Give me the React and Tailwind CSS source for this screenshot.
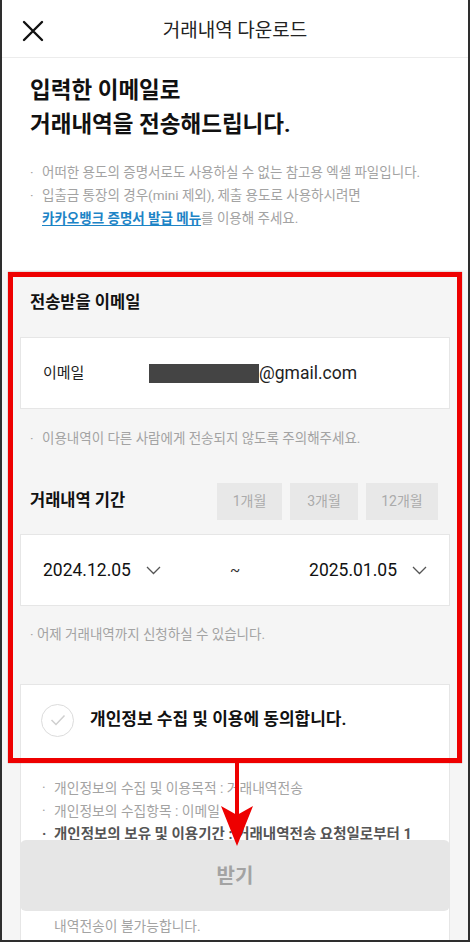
import React from "react";

const FONT = { fontFamily: 'Roboto, "Noto Sans CJK KR", sans-serif' };

function Bullet({ children, className = "" }) {
  return (
    <div className={`flex ${className}`}>
      <span className="w-[12px] shrink-0">·</span>
      <div>{children}</div>
    </div>
  );
}

function Chevron() {
  return (
    <svg width="15" height="9" viewBox="0 0 15 9" className="ml-[15px]">
      <path d="M1 1 L7.5 7.5 L14 1" fill="none" stroke="#555" strokeWidth="1.3" />
    </svg>
  );
}

export default function App() {
  return (
    <div
      className="relative w-[470px] h-[942px] overflow-hidden bg-white border-x-2 border-b-2 border-[#2e2e2e]"
      style={FONT}
    >
      {/* header */}
      <div className="relative flex h-[58px] items-center justify-center border-b border-[#ececec] pt-[5px]">
        <svg
          className="absolute left-[20px] top-[20px]"
          width="22"
          height="22"
          viewBox="0 0 22 22"
        >
          <path d="M2 2 L20 20 M20 2 L2 20" stroke="#111" strokeWidth="2.4" strokeLinecap="round" />
        </svg>
        <div className="text-[19px] leading-[24px] text-[#222]">거래내역 다운로드</div>
      </div>

      {/* intro */}
      <div className="px-[28px] pt-[15px] pb-[40px]">
        <div className="text-[22.5px] font-bold leading-[34px] text-[#111]">
          입력한 이메일로
          <br />
          거래내역을 전송해드립니다.
        </div>
        <div className="mt-[20px] text-[13.5px] leading-[23px] text-[#a3a3a3]">
          <Bullet>어떠한 용도의 증명서로도 사용하실 수 없는 참고용 엑셀 파일입니다.</Bullet>
          <Bullet>
            입출금 통장의 경우(mini 제외), 제출 용도로 사용하시려면
            <br />
            <span className="font-bold text-[#1d84c6] underline underline-offset-2">
              카카오뱅크 증명서 발급 메뉴
            </span>
            를 이용해 주세요.
          </Bullet>
        </div>
      </div>

      {/* gray area */}
      <div className="bg-[#f5f5f5] px-[18px] pt-[22px] h-[700px]">
        <div className="pl-[10px] text-[16.5px] font-bold leading-[22px] text-[#111]">
          전송받을 이메일
        </div>
        <div className="mt-[23px] flex h-[72px] items-center border border-[#e6e6e6] bg-white pl-[22px]">
          <span className="w-[106px] text-[15px] text-[#222]">이메일</span>
          <span className="inline-block h-[19px] w-[110px] bg-[#444]" />
          <span className="text-[17.5px] text-[#222]">@gmail.com</span>
        </div>
        <div className="mt-[19px] pl-[10px] text-[13.5px] leading-[20px] text-[#a3a3a3]">
          <Bullet>이용내역이 다른 사람에게 전송되지 않도록 주의해주세요.</Bullet>
        </div>

        <div className="mt-[35px] flex h-[37px] items-center justify-between pl-[10px] pr-[12px]">
          <span className="text-[16.5px] font-bold text-[#111]">거래내역 기간</span>
          <div className="flex gap-[8px] text-[14px] text-[#ababab]">
            <div className="flex h-[37px] w-[65px] items-center justify-center bg-[#e8e8e8]">1개월</div>
            <div className="flex h-[37px] w-[68px] items-center justify-center bg-[#e8e8e8]">3개월</div>
            <div className="flex h-[37px] w-[72px] items-center justify-center bg-[#e8e8e8]">12개월</div>
          </div>
        </div>

        <div className="mt-[14px] flex h-[72px] items-center justify-between border border-[#e6e6e6] bg-white px-[22px]">
          <div className="flex items-center">
            <span className="text-[17.5px] text-[#111]">2024.12.05</span>
            <Chevron />
          </div>
          <span className="text-[15px] text-[#333]">~</span>
          <div className="flex items-center">
            <span className="text-[17.5px] text-[#111]">2025.01.05</span>
            <Chevron />
          </div>
        </div>
        <div className="mt-[18px] pl-[10px] text-[13.5px] leading-[20px] text-[#a3a3a3]">
          · 어제 거래내역까지 신청하실 수 있습니다.
        </div>

        <div className="mt-[40px] h-[400px] border border-[#e6e6e6] bg-white">
          <div className="flex h-[70px] items-center pl-[20px]">
            <div className="flex h-[33px] w-[33px] items-center justify-center rounded-full border border-[#dcdcdc]">
              <svg width="16" height="12" viewBox="0 0 16 12">
                <path d="M1.5 6 L6 10.5 L14.5 1.5" fill="none" stroke="#cfcfcf" strokeWidth="1.5" />
              </svg>
            </div>
            <span className="ml-[16px] text-[17px] font-bold text-[#111]">
              개인정보 수집 및 이용에 동의합니다.
            </span>
          </div>
          <div className="mt-[22px] pl-[21px] text-[13.8px] leading-[23px] text-[#a3a3a3]">
            <Bullet>개인정보의 수집 및 이용목적 : 거래내역전송</Bullet>
            <Bullet>개인정보의 수집항목 : 이메일</Bullet>
            <Bullet className="font-bold text-[#555] text-[14.5px]">
              개인정보의 보유 및 이용기간 : 거래내역전송 요청일로부터 1
            </Bullet>
            <div className="h-[69px]" />
            <div className="pl-[12px]">내역전송이 불가능합니다.</div>
          </div>
        </div>
      </div>

      {/* sticky button */}
      <div className="absolute left-[18px] top-[840px] flex h-[71px] w-[430px] items-center justify-center rounded-[6px] bg-[#e6e6e6] text-[20px] font-bold text-[#a3a3a3]">
        받기
      </div>

      {/* red annotation */}
      <div className="pointer-events-none absolute left-[6px] top-[272px] h-[491px] w-[454px] border-[5px] border-[#ee0000] shadow-[0_0_1px_rgba(120,0,0,0.6)]" />
      <svg
        className="pointer-events-none absolute left-[213px] top-[758px]"
        width="44"
        height="92"
        viewBox="0 0 44 92"
      >
        <rect x="20" y="0" width="4" height="60" fill="#ee0000" />
        <polygon points="6,48 22,88 38,48 22,57" fill="#ee0000" />
      </svg>
    </div>
  );
}
